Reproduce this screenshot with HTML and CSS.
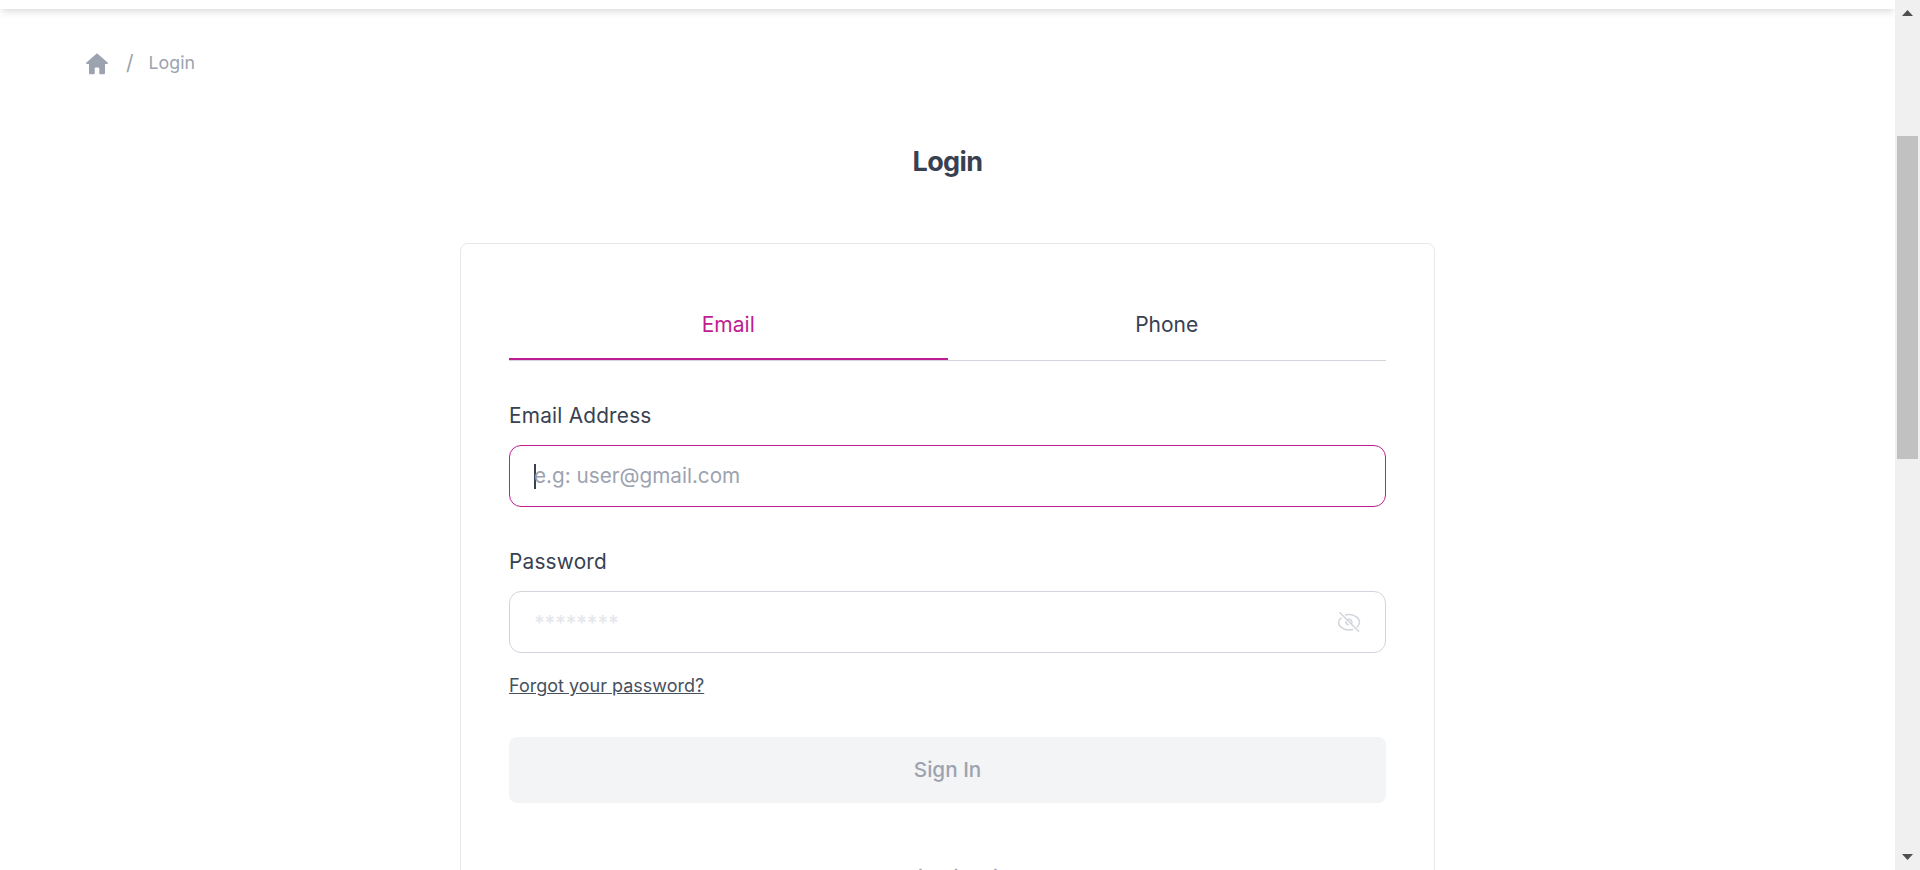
FILE: index.html
```
<!DOCTYPE html>
<html lang="en">
<head>
<meta charset="utf-8">
<title>Login</title>
<link rel="stylesheet" href="styles.css">
</head>
<body>
<div class="viewport">
  <div class="page">
    <header class="topbar"></header>
    <nav class="breadcrumb">
      <svg class="home" viewBox="0 0 22 22"><path d="M11 0.2 21.6 9.6c.5.5.2 1.4-.5 1.4H19v9c0 .8-.5 1.3-1.3 1.3H14.3c-.7 0-1-.4-1-1V16c0-.9-.5-1.400-1.300-1.400H10c-.8 0-1.300.5-1.300 1.400v4.300c0 .6-.3 1-1 1H4.300C3.500 21.300 3 20.800 3 20v-9H.9c-.7 0-1-.9-.5-1.400z"/></svg>
      <span class="slash">/</span>
      <span class="crumb">Login</span>
    </nav>
    <h1 class="title">Login</h1>
    <main class="card">
      <div class="tabs">
        <div class="tab active">Email</div>
        <div class="tab">Phone</div>
      </div>
      <label class="label">Email Address</label>
      <div class="field focused"><span class="caret"></span><span class="placeholder">e.g: user@gmail.com</span></div>
      <label class="label second">Password</label>
      <div class="field"><span class="placeholder stars">********</span>
        <svg class="eye" viewBox="0 0 24 24"><path d="M4.500 7.600C2.500 9 1.500 10.800 1.500 12.200c0 4 4.800 7.800 10.500 7.800 1.500 0 2.900-.3 4.100-.8M8 5.100C9.200 4.600 10.600 4.400 12 4.400c5.700 0 10.500 3.800 10.500 7.800 0 1.900-1.100 3.700-2.900 5.100M9.800 9.800a3.300 3.300 0 0 1 5.200 2.400v1.200M9.200 11.300c-.4 1.500.5 3.200 2.300 3.700M2.500 2.300l19.500 19.500"/></svg>
      </div>
      <a class="forgot">Forgot your password?</a>
      <div class="submit">Sign In</div>
      <p class="alt">Or sign in with</p>
    </main>
  </div>
  <div class="scrollbar">
    <svg class="arrow" viewBox="0 0 11 6"><path d="M5.500 0 11 6H0z"/></svg>
    <div class="track"><div class="thumb"></div></div>
    <svg class="arrow" viewBox="0 0 11 6"><path d="M0 0h11L5.500 6z"/></svg>
  </div>
</div>
</body>
</html>
```
FILE: styles.css
```
* { box-sizing: border-box; }
body { margin: 0; background: #fff; font-family: Inter, "Liberation Sans", sans-serif; color: #374151; }
.viewport { display: flex; height: 870px; overflow: hidden; }
.page { flex: 1; height: 870px; overflow: hidden; display: flex; flex-direction: column; align-items: center; background: #fff; }
.topbar { width: 100%; height: 9px; flex: none; background: #fff; box-shadow: 0 5px 7.500px -1.250px rgba(0,0,0,.1), 0 2.500px 5px -2.500px rgba(0,0,0,.1); }
.breadcrumb { align-self: stretch; height: 28px; flex: none; margin-top: 40px; padding-left: 86.400px; display: flex; align-items: center; color: #9ca3af; }
.home { width: 22px; height: 22px; fill: #9ca3af; margin-top: 1px; }
.slash { font-size: 21px; line-height: 28px; margin-left: 17.600px; }
.crumb { font-size: 17.800px; line-height: 28px; margin-left: 15px; }
.title { margin: 65px 0 0; flex: none; height: 40px; line-height: 40px; font-size: 27px; font-weight: 650; letter-spacing: -.6px; }
.card { width: 975px; flex: none; margin-top: 61px; height: 700px; padding: 48px; border: 1px solid #e5e7eb; border-radius: 8px; background: #fff; display: flex; flex-direction: column; }
.tabs { display: flex; height: 69px; border-bottom: 1px solid #d1d5db; }
.tab { flex: 1; height: 68px; text-align: center; font-size: 21px; line-height: 66px; }
.active { color: #be1e8f; border-bottom: 2px solid #be1e8f; }
.label { margin-top: 39px; height: 30px; font-size: 20.800px; line-height: 31px; font-weight: 400; letter-spacing: .22px; }
.second { margin-top: 39px; }
.field { height: 62px; margin-top: 15px; border: 1px solid #d1d5db; border-radius: 12px; padding: 0 24px; display: flex; align-items: center; font-size: 20.700px; }
.focused { border-color: #be1e8f; }
.caret { width: 2px; height: 25px; margin-right: -2px; background: #374151; }
.placeholder { color: #9ca3af; padding-bottom: 1px; }
.stars { color: #e5e7eb; font-weight: 500; letter-spacing: -.2px; padding-bottom: 0; }
.eye { width: 24px; height: 24px; margin-left: auto; fill: none; stroke: #d1d5db; stroke-width: 1.500; }
.forgot { margin-top: 20px; height: 25px; line-height: 25px; font-size: 18px; color: #465060; text-decoration: underline; }
.submit { margin-top: 39px; height: 66px; border-radius: 8px; background: #f3f4f6; color: #9ca3af; font-size: 20.700px; font-weight: 500; line-height: 66px; text-align: center; }
.alt { margin: 60px 0 0; text-align: center; font-size: 20.500px; line-height: 30px; color: #9ca3af; }
.scrollbar { width: 25px; height: 870px; background: #f0f0f0; display: flex; flex-direction: column; align-items: center; padding: 10px 0; }
.arrow { width: 11px; height: 6px; fill: #505050; flex: none; }
.track { flex: 1; width: 21px; padding-top: 120px; }
.thumb { height: 323px; background: #c1c1c1; }
```
